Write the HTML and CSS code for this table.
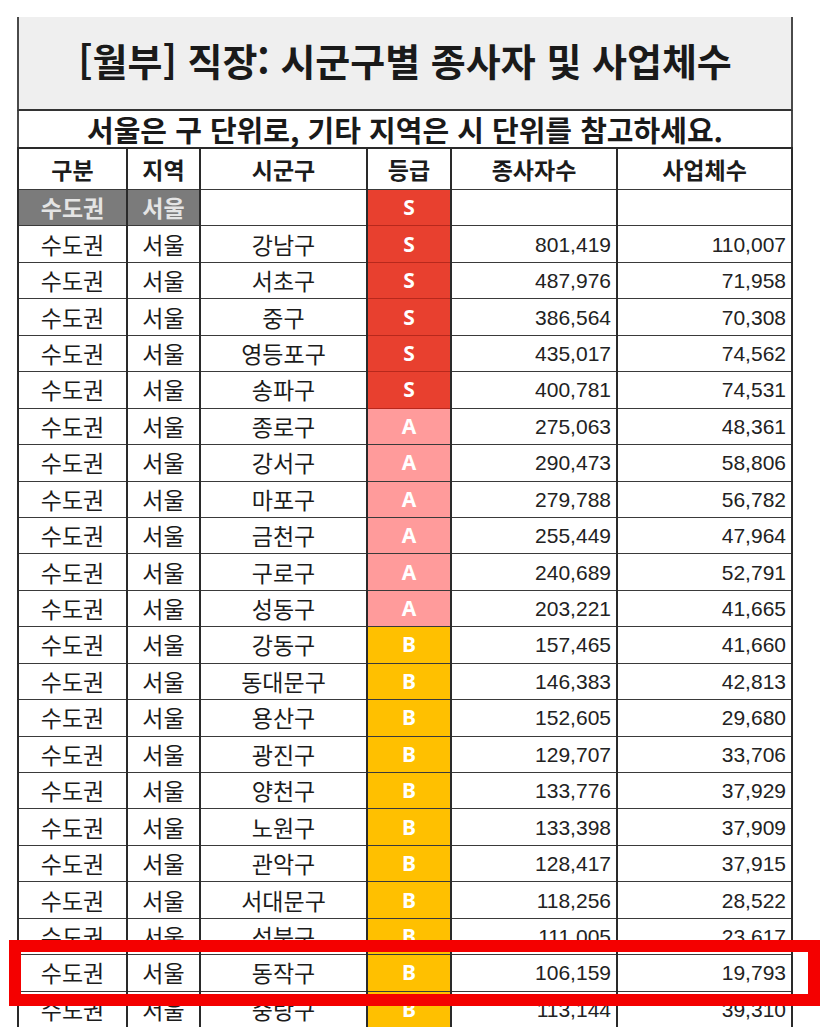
FILE: index.html
```html
<!DOCTYPE html>
<html lang="ko">
<head>
<meta charset="utf-8">
<title>[월부] 직장: 시군구별 종사자 및 사업체수</title>
<link rel="stylesheet" href="styles.css">
</head>
<body>
<div class="page">
  <div class="sheet">
    <div class="title">[월부] 직장: 시군구별 종사자 및 사업체수</div>
    <div class="subtitle">서울은 구 단위로, 기타 지역은 시 단위를 참고하세요.</div>
    <table class="grid">
      <colgroup>
        <col class="c1"><col class="c2"><col class="c3"><col class="c4"><col class="c5"><col class="c6">
      </colgroup>
      <thead>
        <tr class="head">
          <th class="shade">구분</th><th class="shade">지역</th><th>시군구</th><th>등급</th><th>종사자수</th><th>사업체수</th>
        </tr>
      </thead>
      <tbody>
        <tr class="group">
          <td class="dark">수도권</td><td class="dark">서울</td><td></td><td class="g s">S</td><td></td><td></td>
        </tr>
        <tr><td>수도권</td><td>서울</td><td>강남구</td><td class="g s">S</td><td class="n">801,419</td><td class="n">110,007</td></tr>
        <tr><td>수도권</td><td>서울</td><td>서초구</td><td class="g s">S</td><td class="n">487,976</td><td class="n">71,958</td></tr>
        <tr><td>수도권</td><td>서울</td><td>중구</td><td class="g s">S</td><td class="n">386,564</td><td class="n">70,308</td></tr>
        <tr><td>수도권</td><td>서울</td><td>영등포구</td><td class="g s">S</td><td class="n">435,017</td><td class="n">74,562</td></tr>
        <tr><td>수도권</td><td>서울</td><td>송파구</td><td class="g s">S</td><td class="n">400,781</td><td class="n">74,531</td></tr>
        <tr><td>수도권</td><td>서울</td><td>종로구</td><td class="g a">A</td><td class="n">275,063</td><td class="n">48,361</td></tr>
        <tr><td>수도권</td><td>서울</td><td>강서구</td><td class="g a">A</td><td class="n">290,473</td><td class="n">58,806</td></tr>
        <tr><td>수도권</td><td>서울</td><td>마포구</td><td class="g a">A</td><td class="n">279,788</td><td class="n">56,782</td></tr>
        <tr><td>수도권</td><td>서울</td><td>금천구</td><td class="g a">A</td><td class="n">255,449</td><td class="n">47,964</td></tr>
        <tr><td>수도권</td><td>서울</td><td>구로구</td><td class="g a">A</td><td class="n">240,689</td><td class="n">52,791</td></tr>
        <tr><td>수도권</td><td>서울</td><td>성동구</td><td class="g a">A</td><td class="n">203,221</td><td class="n">41,665</td></tr>
        <tr><td>수도권</td><td>서울</td><td>강동구</td><td class="g b">B</td><td class="n">157,465</td><td class="n">41,660</td></tr>
        <tr><td>수도권</td><td>서울</td><td>동대문구</td><td class="g b">B</td><td class="n">146,383</td><td class="n">42,813</td></tr>
        <tr><td>수도권</td><td>서울</td><td>용산구</td><td class="g b">B</td><td class="n">152,605</td><td class="n">29,680</td></tr>
        <tr><td>수도권</td><td>서울</td><td>광진구</td><td class="g b">B</td><td class="n">129,707</td><td class="n">33,706</td></tr>
        <tr><td>수도권</td><td>서울</td><td>양천구</td><td class="g b">B</td><td class="n">133,776</td><td class="n">37,929</td></tr>
        <tr><td>수도권</td><td>서울</td><td>노원구</td><td class="g b">B</td><td class="n">133,398</td><td class="n">37,909</td></tr>
        <tr><td>수도권</td><td>서울</td><td>관악구</td><td class="g b">B</td><td class="n">128,417</td><td class="n">37,915</td></tr>
        <tr><td>수도권</td><td>서울</td><td>서대문구</td><td class="g b">B</td><td class="n">118,256</td><td class="n">28,522</td></tr>
        <tr><td>수도권</td><td>서울</td><td>성북구</td><td class="g b">B</td><td class="n">111,005</td><td class="n">23,617</td></tr>
        <tr><td>수도권</td><td>서울</td><td>동작구</td><td class="g b">B</td><td class="n">106,159</td><td class="n">19,793</td></tr>
        <tr><td>수도권</td><td>서울</td><td>중랑구</td><td class="g b">B</td><td class="n">113,144</td><td class="n">39,310</td></tr>
      </tbody>
    </table>
  </div>
  <div class="highlight"></div>
</div>
</body>
</html>
```

FILE: styles.css
```css
html, body {
  margin: 0;
  padding: 0;
  background: #ffffff;
}

.page {
  position: relative;
  width: 827px;
  height: 1033px;
  overflow: hidden;
  font-family: "Noto Sans CJK KR", "Noto Sans", sans-serif;
  color: #1c1c1c;
}

.sheet {
  margin: 17px 0 0 17px;
  width: 776px;
  height: 1010px;
  overflow: hidden;
}

.title {
  box-sizing: border-box;
  height: 94px;
  background: #efefef;
  border-left: 2px solid #4a4a4a;
  border-right: 2px solid #4a4a4a;
  border-bottom: 2px solid #333333;
  display: flex;
  align-items: center;
  justify-content: center;
  padding-bottom: 8px;
  font-size: 38px;
  font-weight: 700;
  color: #1a1a1a;
}

.subtitle {
  box-sizing: border-box;
  height: 36px;
  border-left: 2px solid #4a4a4a;
  border-right: 2px solid #4a4a4a;
  display: flex;
  align-items: center;
  justify-content: center;
  font-size: 29px;
  font-weight: 700;
  color: #1a1a1a;
  line-height: 1;
}

.grid {
  width: 776px;
  table-layout: fixed;
  border-collapse: collapse;
}

.c1 { width: 109px; }
.c2 { width: 73px; }
.c3 { width: 167px; }
.c4 { width: 84px; }
.c5 { width: 166px; }
.c6 { width: 175px; }

.grid th,
.grid td {
  border: 1px solid #3a3a3a;
  border-left: 2px solid #2a2a2a;
  border-right: 2px solid #2a2a2a;
  padding: 0;
  text-align: center;
  font-size: 23px;
  line-height: 1;
  white-space: nowrap;
  overflow: hidden;
}

.grid tr.head th {
  height: 40px;
  font-weight: 700;
  border-top: 2px solid #2a2a2a;
  background: #ffffff;
}

.grid th.shade {
  background: #e6e6e6;
}

.grid tbody tr {
  height: 36.45px;
}

.grid td.dark {
  background: #7b7b7b;
  color: #e4e4e4;
  font-weight: 700;
}

.grid td.n {
  text-align: right;
  padding-right: 5px;
  font-family: "Liberation Sans", Arial, sans-serif;
  font-size: 21px;
  color: #222222;
}

.grid td.g {
  color: #ffffff;
  font-weight: 700;
  font-size: 21px;
  font-family: "Noto Sans", "Liberation Sans", sans-serif;
}

.grid td.s {
  background: #e8402f;
  border-top-color: #b8281c;
  border-bottom-color: #b8281c;
}

.grid td.a {
  background: #ff9b9b;
}

.grid td.b {
  background: #ffc000;
}

.highlight {
  position: absolute;
  left: 9px;
  top: 940px;
  width: 811px;
  height: 66px;
  box-sizing: border-box;
  border: 12px solid #f40000;
}
```
